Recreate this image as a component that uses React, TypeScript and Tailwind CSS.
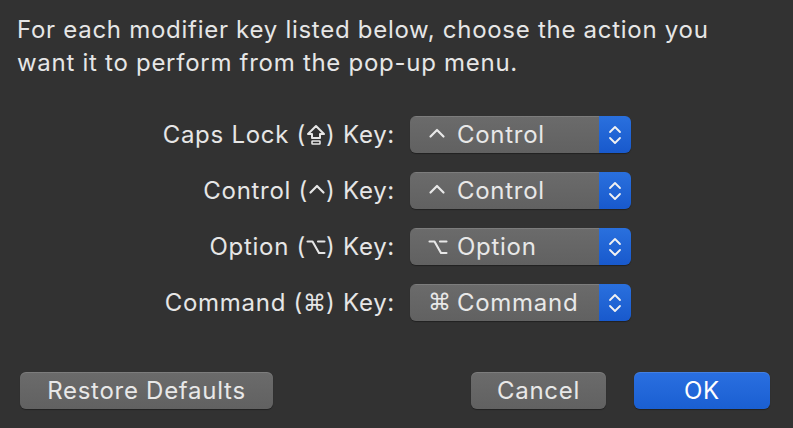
import React from "react";

const FONT = "font-['Inter','Noto_Sans','DejaVu_Sans',sans-serif]";
const SYM = "font-['DejaVu_Sans',sans-serif]";

type Sym = "caps" | "ctrl" | "opt" | "cmd";

const ROWS: { label: string; sym: Sym; valueSym: Sym; value: string }[] = [
  { label: "Caps Lock", sym: "caps", valueSym: "ctrl", value: "Control" },
  { label: "Control", sym: "ctrl", valueSym: "ctrl", value: "Control" },
  { label: "Option", sym: "opt", valueSym: "opt", value: "Option" },
  { label: "Command", sym: "cmd", valueSym: "cmd", value: "Command" },
];

function KeySymbol({ sym }: { sym: Sym }) {
  if (sym === "ctrl") {
    return (
      <svg width="18" height="22" viewBox="0 0 18 22" fill="none" className="inline-block align-[-3px]">
        <path d="M2.5 12.5 L9 6 L15.5 12.5" stroke="currentColor" strokeWidth="2.2" strokeLinecap="round" strokeLinejoin="round" />
      </svg>
    );
  }
  if (sym === "caps") {
    return (
      <svg width="20" height="22" viewBox="0 0 20 22" fill="none" className="inline-block align-[-3px]">
        <path d="M10 2 L18 10 L14 10 L14 14 L6 14 L6 10 L2 10 Z" stroke="currentColor" strokeWidth="2" strokeLinejoin="round" />
        <rect x="6" y="17" width="8" height="3" rx="0.5" stroke="currentColor" strokeWidth="1.6" />
      </svg>
    );
  }
  if (sym === "opt") {
    return (
      <svg width="20" height="22" viewBox="0 0 20 22" fill="none" className="inline-block align-[-3px]">
        <path d="M1.5 5.5 H6.5 L13 17 H18.5 M12 5.5 H18.5" stroke="currentColor" strokeWidth="2.1" strokeLinecap="round" strokeLinejoin="round" />
      </svg>
    );
  }
  return <span className={`${SYM} text-[23px] tracking-normal`}>⌘</span>;
}

function Chevrons() {
  return (
    <svg width="14" height="26" viewBox="0 0 14 26" fill="none">
      <path d="M2 10 L7 5 L12 10" stroke="#f2f2f2" strokeWidth="1.8" strokeLinecap="round" strokeLinejoin="round" />
      <path d="M2 16 L7 21 L12 16" stroke="#f2f2f2" strokeWidth="1.8" strokeLinecap="round" strokeLinejoin="round" />
    </svg>
  );
}

function PopUp({ sym, value }: { sym: Sym; value: string }) {
  return (
    <div className="flex h-[37px] w-[221px] overflow-hidden rounded-[6px] shadow-[0_1px_1px_rgba(0,0,0,0.35)]">
      <div className="flex flex-1 items-center bg-gradient-to-b from-[#6b6b6b] to-[#616161] pl-[18px] text-[#e8e8e8] shadow-[inset_0_1px_0_rgba(255,255,255,0.12)]">
        <span className="flex w-[29px] items-center">
          <KeySymbol sym={sym} />
        </span>
        <span>{value}</span>
      </div>
      <div className="flex w-[32px] items-center justify-center bg-gradient-to-b from-[#2a70de] to-[#1859cc]">
        <Chevrons />
      </div>
    </div>
  );
}

function Button({ children, primary, className }: { children: React.ReactNode; primary?: boolean; className?: string }) {
  return (
    <button
      className={`flex h-[37px] items-center justify-center rounded-[6px] shadow-[0_1px_1px_rgba(0,0,0,0.35),inset_0_1px_0_rgba(255,255,255,0.12)] ${
        primary ? "bg-gradient-to-b from-[#2a6fe0] to-[#1a5fd2] text-white" : "bg-gradient-to-b from-[#6b6b6b] to-[#616161] text-[#e8e8e8]"
      } ${className ?? ""}`}
    >
      {children}
    </button>
  );
}

export default function App() {
  return (
    <div className={`${FONT} flex h-[428px] w-[793px] flex-col bg-[#323232] text-[24px] tracking-[0.03em] text-[#e6e6e6] antialiased`}>
      <p className="m-0 pl-[17px] pt-[13px] leading-[33px]">
        For each modifier key listed below, choose the action you
        <br />
        want it to perform from the pop-up menu.
      </p>
      <div className="mt-[37px] flex flex-col gap-[19px]">
        {ROWS.map((r) => (
          <div key={r.label} className="flex items-center">
            <span className="w-[395px] text-right">
              {r.label} (<KeySymbol sym={r.sym} />) Key:
            </span>
            <div className="ml-[15px]">
              <PopUp sym={r.valueSym} value={r.value} />
            </div>
          </div>
        ))}
      </div>
      <div className="mt-[51px] flex items-center pl-[20px] pr-[23px]">
        <Button className="w-[253px]">Restore Defaults</Button>
        <div className="flex-1" />
        <Button className="w-[135px]">Cancel</Button>
        <Button primary className="ml-[28px] w-[136px]">OK</Button>
      </div>
    </div>
  );
}
